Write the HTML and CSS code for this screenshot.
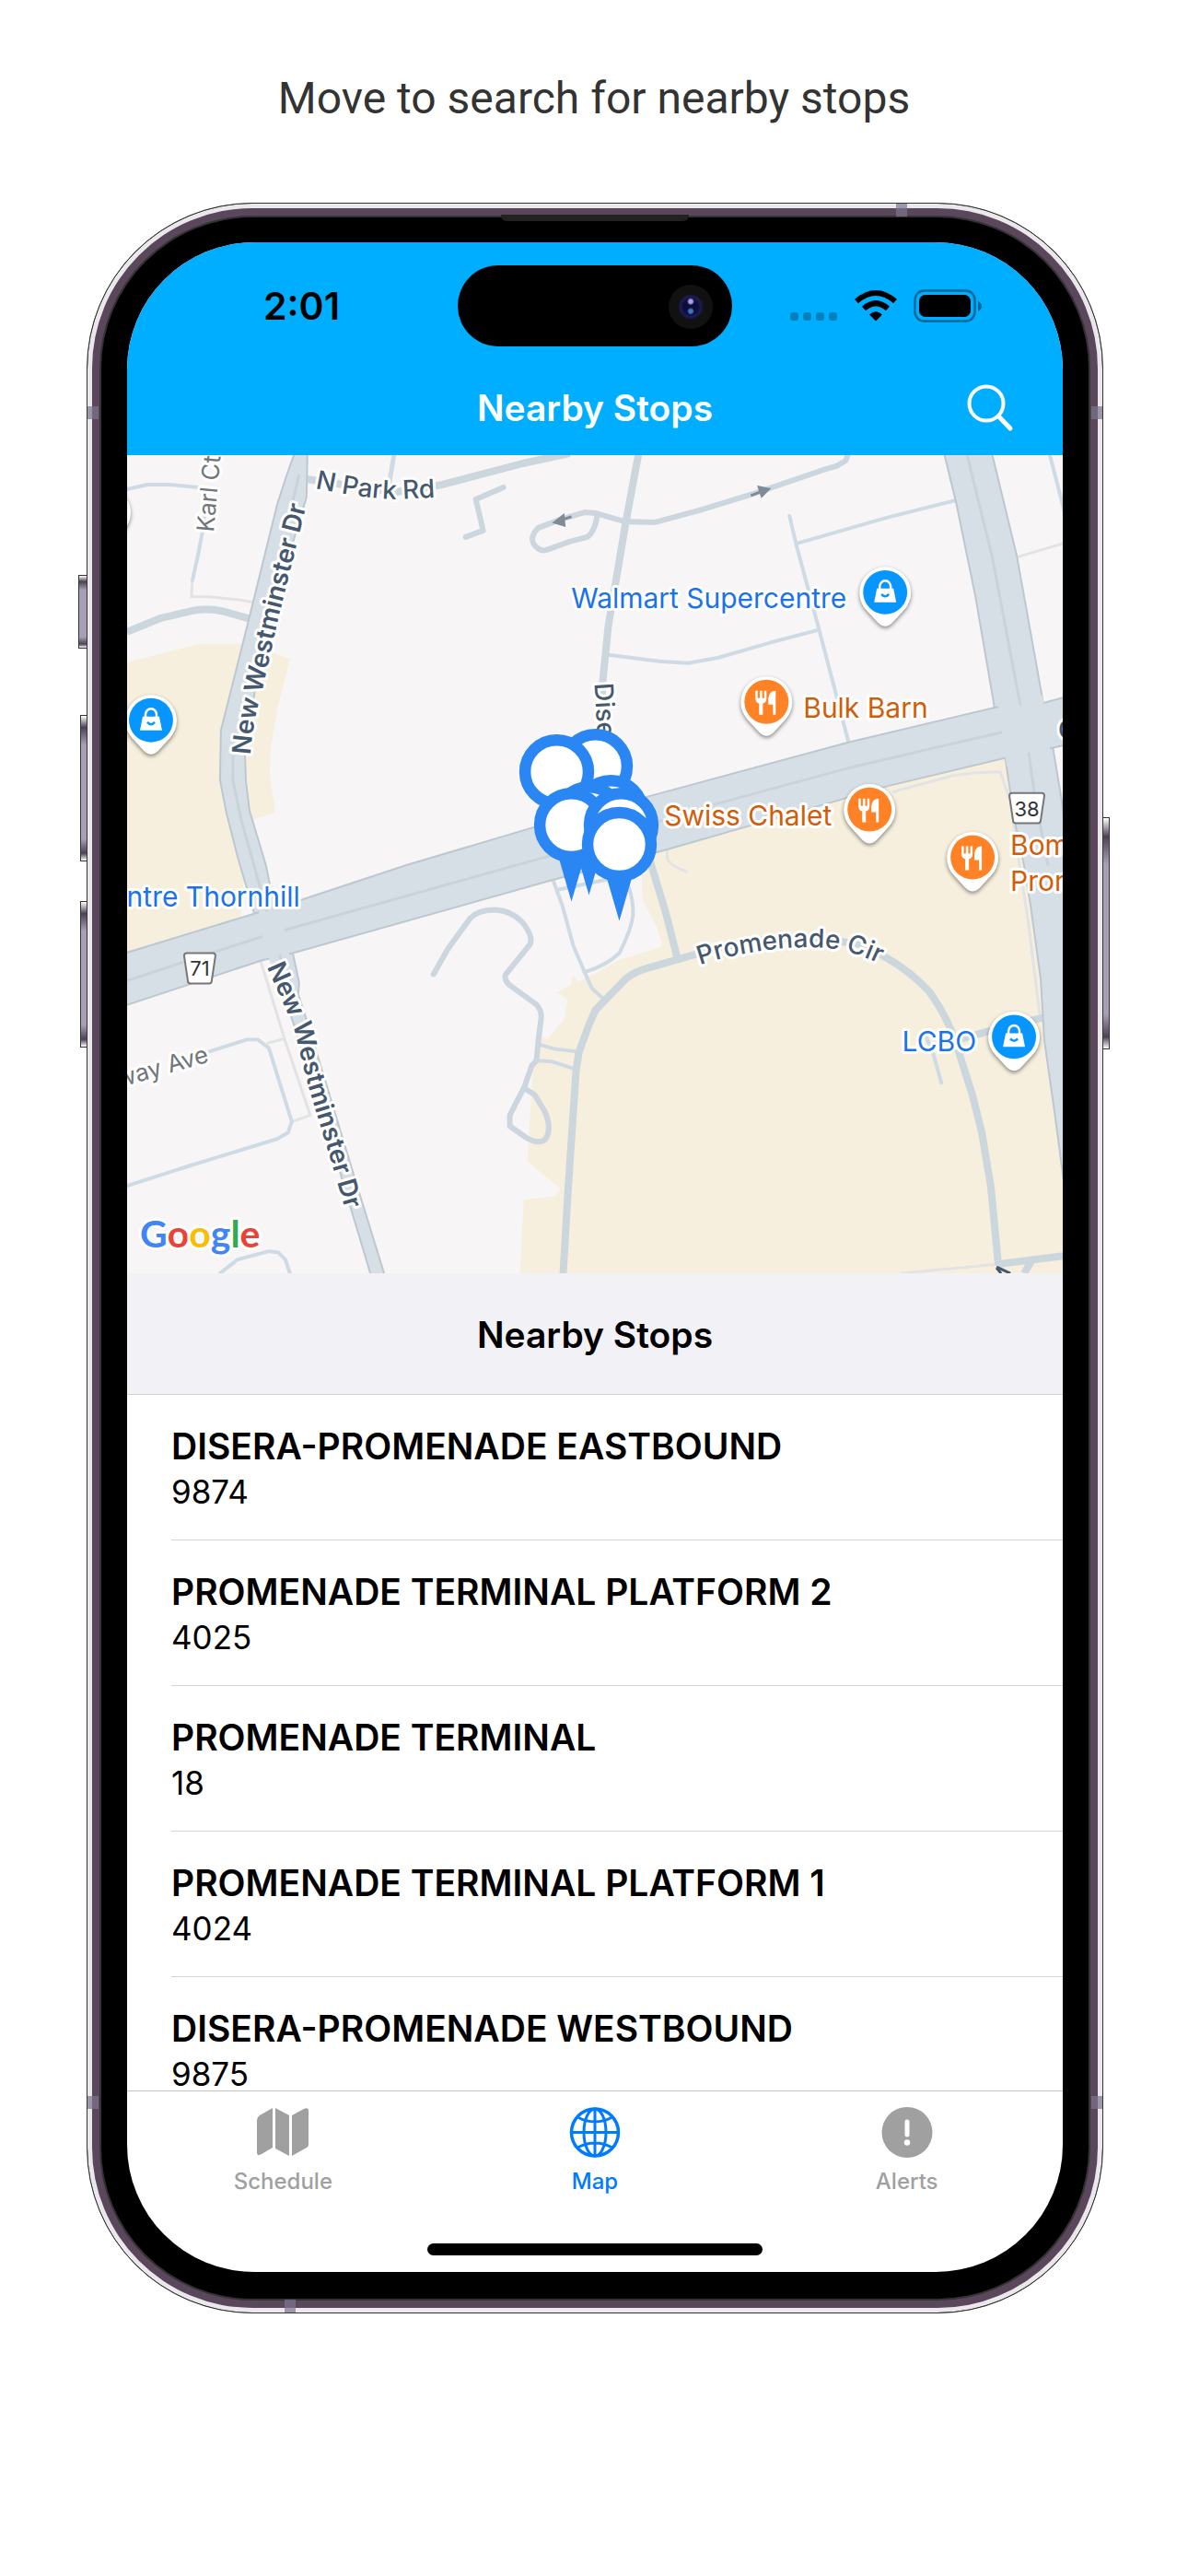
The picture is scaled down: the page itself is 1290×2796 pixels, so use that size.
FILE: index.html
```
<!DOCTYPE html>
<html lang="en">
<head>
    <meta charset="UTF-8"/>
    <meta name="viewport" content="width=device-width, initial-scale=1.0"/>
    <title>Nearby Stops</title>
    <link rel="stylesheet" href="styles.css">
</head>
<body>
<h1 class="caption">Move to search for nearby stops</h1>

<div class="phone">
    <span class="key key-mute"></span>
    <span class="key key-up"></span>
    <span class="key key-down"></span>
    <span class="key key-power"></span>
    <span class="band band-left-top"></span>
    <span class="band band-left-bottom"></span>
    <span class="band band-right-top"></span>
    <span class="band band-right-bottom"></span>
    <span class="band band-top"></span>
    <span class="band band-bottom"></span>
    <span class="speaker"></span>

    <div class="screen">
        <!-- Header -->
        <header class="header">
            <div class="status">
                <span class="time">2:01</span>
                <div class="island"><span class="camera"></span></div>
                <div class="status-icons">
                    <svg width="52" height="36" viewBox="0 0 52 36" fill="#000" opacity=".25">
                        <rect x="0" y="25" width="9" height="9" rx="3"/>
                        <rect x="14" y="25" width="9" height="9" rx="3"/>
                        <rect x="28" y="25" width="9" height="9" rx="3"/>
                        <rect x="42" y="25" width="9" height="9" rx="3"/>
                    </svg>
                    <svg width="46" height="36" viewBox="0 0 46 36">
                        <path d="M23 34.500 L16 27.500 Q23 21 30 27.500 Z"/>
                        <path d="M10 21 Q23 9.500 36 21" fill="none" stroke="#000" stroke-width="6"/>
                        <path d="M2 13 Q23 -5 44 13" fill="none" stroke="#000" stroke-width="6"/>
                    </svg>
                    <svg width="74" height="36" viewBox="0 0 74 36">
                        <rect x="1.500" y="1.500" width="65" height="33" rx="10" fill="none" stroke="#000" stroke-opacity=".4" stroke-width="2.500"/>
                        <rect x="6" y="6" width="56" height="24" rx="7"/>
                        <path d="M70 13 Q74 15 74 18.500 Q74 22 70 24 Z" opacity=".4"/>
                    </svg>
                </div>
            </div>
            <div class="navbar">
                <h2>Nearby Stops</h2>
                <button class="search" aria-label="Search">
                    <svg width="52" height="56" viewBox="0 0 52 56" fill="none" stroke="#fff" stroke-width="4" stroke-linecap="round">
                        <circle cx="21" cy="21" r="18.500"/>
                        <path d="M34.500 35 L47 48" stroke-width="5"/>
                    </svg>
                </button>
            </div>
        </header>

        <!-- Map -->
        <svg class="map" viewBox="138 494 1017 889" role="img" aria-label="Map of nearby stops">
            <defs>
                <g id="poi">
                    <path d="M0 37 Q-4 37 -8 33 L-20 20 A28 28 0 1 1 20 20 L8 33 Q4 37 0 37 Z"/>
                </g>
                <g id="shop">
                    <use href="#poi" class="poi-back"/>
                    <circle r="24" fill="#0795ff"/>
                    <path d="M-9 -4 H9 L12 11 H-12 Z" fill="#fff"/>
                    <path d="M-6 -3 V-6 A6 6.500 0 0 1 6 -6 V-3" fill="none" stroke="#fff" stroke-width="2.500"/>
                    <path d="M-4 2 Q0 7 4 2" fill="none" stroke="#0795ff" stroke-width="2.500"/>
                </g>
                <g id="food">
                    <use href="#poi" class="poi-back"/>
                    <circle r="24" fill="#ff8227"/>
                    <path d="M-12 -12 V-4 Q-12 1 -8 2 V14 H-4 V2 Q0 1 0 -4 V-12 H-2.500 V-4 H-4.700 V-12 H-7.300 V-4 H-9.500 V-12 Z" fill="#fff"/>
                    <path d="M10 -12 V14 H7 V3 H2 V-4 Q3 -12 10 -12 Z" fill="#fff"/>
                </g>
                <g id="stop">
                    <path d="M-14 35 L0 83 L14 35 Z" fill="#2a86f2"/>
                    <circle r="34.500" fill="#fff" stroke="#2a86f2" stroke-width="12.500"/>
                </g>
                <path id="p-karl" d="M232 578 L242 470"/>
                <path id="p-park" d="M342 530 Q395 541 430 542 L490 539"/>
                <path id="p-west-up" d="M272 820 C274 790 280 765 286 745 L302 673 L340 520"/>
                <path id="p-west-down" d="M290 1050 L319 1115 L335 1180 L360 1262 L390 1365"/>
                <path id="p-disera" d="M646 742 L652 850"/>
                <path id="p-prom" d="M761 1048 C800 1034 870 1024 909 1031 C925 1033 950 1042 980 1060"/>
            </defs>

            <rect x="138" y="494" width="1017" height="889" fill="#f7f5f6"/>

            <!-- commercial areas -->
            <g fill="#f6efde">
                <path d="M138 719 L178 709 L218 699 L265 699 L297 709 L315 716 L302 767 L294 813 L293 840 L299 882 L275 890 L265 955 L261 1005 L138 1040 Z"/>
                <path d="M716 925 L967 853 L1092 823 L1113 930 L1131 1063 L1155 1273 V1383 H565 L569 1303 L604 1299 L609 1291 L573 1261 L579 1160 L583 1123 L595 1128 L613 1107 L617 1085 L605 1078 L620 1070 L622 1060 L629 1066 L660 1050 L671 1043 L720 1028 L714 1007 L698 977 L697 940 Z"/>
            </g>

            <!-- footpaths -->
            <g class="path">
                <path d="M209 630 L208 648 L227 648 L258 651 L275 654"/>
                <path d="M1105 605 L1155 590"/>
                <path d="M970 860 L1036 842 L1060 839 L1087 838 L1098 870 L1108 940 L1117 997 L1130 1102"/>
                <path d="M725 922 V933 Q730 941 747 947"/>
                <path d="M283 1043 L309 1128 L337 1211 L318 1218 M290 1133 L309 1128"/>
                <path d="M979 1383 L1084 1373"/>
            </g>

            <!-- minor roads -->
            <g class="lane">
                <path d="M138 531 L160 526 H185 L215 529"/>
                <path d="M224 540 L220 577 L215 603 L209 630"/>
                <path d="M428 494 L423 525" stroke-width="5"/>
                <path d="M858 560 L865 590 L890 683 L922 805"/>
                <path d="M866 590 L960 563 L1039 543"/>
                <path d="M661 711 L716 718 L748 720 L781 714 L836 698 L889 684"/>
                <path d="M1141 494 L1157 556"/>
                <path d="M585 1134 L602 1139 L627 1142 M585 1152 L600 1153 L625 1161"/>
                <path d="M601 956 L611 983 L623 1027 L635 1055 L643 1073 L656 1085 M607 966 L660 955"/>
                <path d="M683 963 Q688 975 688 993 Q686 1010 673 1035 Q660 1048 635 1056"/>
                <path d="M215 1146 L268 1129 H280 L292 1138 L317 1218 L313 1230 L301 1237 L203 1267 L138 1288"/>
                <path d="M239 1383 L258 1368 L292 1359 L302 1360 L310 1368 L315 1383"/>
                <path d="M1007 1127 L1015 1147 L1023 1176"/>
            </g>
            <g class="drive">
                <path d="M547 529 L517 542 L525 576 L506 583"/>
                <path d="M647 557 L636 556 L609 564 L585 573 Q573 585 583 594 Q588 599 594 597 L619 588 L638 583 Q646 578 649 560"/>
                <path d="M647 557 L678 566 L712 567 L760 554 L819 536 L895 510 L909 506 L919 500 L922 492"/>
                <path d="M471 1058 L487 1030 L511 997 Q520 988 538 988 Q556 989 568 1002 Q582 1020 574 1028 L549 1059 Q548 1065 554 1070 L583 1091 Q589 1098 588 1106 L585 1130 L583 1152 L578 1157 L570 1180 L554 1211 V1223 L571 1235 Q585 1244 593 1237 Q600 1225 592 1207 L581 1189 L570 1182"/>
            </g>
            <g class="street">
                <path d="M333 520 L400 530 L430 534 L481 526 L568 503 L619 492"/>
                <path d="M694 492 L680 567 L661 680 L655 740 L648 880"/>
                <path d="M138 686 L175 671 L209 663 Q227 660 244 664 L272 672"/>
                <path d="M612 1383 L617 1297 L626 1163 L629 1143 L640 1113 L647 1097 L680 1063 Q690 1055 705 1051 L778 1030 L833 1020 L881 1018 L933 1025 L960 1038 Q990 1055 1010 1077 Q1030 1105 1039 1133 L1057 1190 L1067 1230 L1077 1290 L1085 1374"/>
                <path d="M705 930 L724 993 L736 1040"/>
                <path d="M1085 1373 L1155 1364 M1122 1368 L1113 1383"/>
                <path d="M1045 1128 L1074 1120 L1134 1105"/>
            </g>

            <!-- arterial roads -->
            <g class="arterial">
                <path d="M320 492 L311 517 L301 548 L271 670 L240 793 L239 847 L246 883 L258 930 L280 1005 L302 1005 L289 940 L271 880 L267 847 L266 813 L280 733 L311 613 L333 540 L334 492 Z"/>
                <path d="M292 1030 L320 1115 L370 1275 L403 1385 H418 L397 1317 L385 1278 L334 1110 L324 1080 L325 1067 L317 1030 Z"/>
                <path d="M1026 492 L1039 545 L1060 647 L1082 775 L1092 820 L1103 893 L1113 940 L1120 983 L1131 1063 L1135 1130 L1146 1207 L1157 1290 L1200 1290 L1154 870 L1144 810 L1135 770 L1105 603 L1078 492 Z"/>
                <path d="M136 1035 L277 992 L328 977 L440 940 L581 898 L704 865 L922 806 L1082 768 L1135 763 L1157 757 V809 L1144 812 L1092 823 L967 853 L716 925 L599 956 L318 1035 L284 1043 L136 1092 Z"/>
            </g>
            <g fill="#d7dfe6">
                <path d="M1084 760 L1133 755 L1142 820 L1094 832 Z"/>
                <path d="M279 980 L295 970 L316 1042 L294 1048 Z"/>
            </g>
            <g class="median">
                <path d="M1051 494 L1078 603 L1109 766"/>
                <path d="M1089 795 L926 833 L778 873 L595 930 L309 1010"/>
                <path d="M285 1017 L138 1065"/>
                <path d="M253 820 V847 L262 890 L290 990"/>
                <path d="M325 515 L318 545"/>
                <path d="M304 1037 L310 1060"/>
                <path d="M1118 817 L1125 867 L1139 940"/>
            </g>
            <g fill="#808b96" stroke="#808b96" stroke-width="3">
                <path d="M621 561 L608 565 M612 560 L603 567 L613 570 Z"/>
                <path d="M816 538 L829 533 M825 529 L835 531 L828 538 Z"/>
            </g>

            <!-- road labels -->
            <g class="road-label">
                <text class="local"><textPath href="#p-karl">Karl Ct</textPath></text>
                <text><textPath href="#p-park">N Park Rd</textPath></text>
                <text class="major"><textPath href="#p-west-up">New Westminster Dr</textPath></text>
                <text class="major"><textPath href="#p-west-down">New Westminster Dr</textPath></text>
                <text><textPath href="#p-disera">Disera</textPath></text>
                <text><textPath href="#p-prom">Promenade Cir</textPath></text>
                <text class="local" text-anchor="end" transform="translate(228 1153) rotate(-16)">way Ave</text>
                <text x="1150" y="802">C</text>
                <path d="M1083 1376 L1098 1383 M1088 1383 L1083 1377" stroke="#46586e" stroke-width="3"/>
            </g>
            <g class="shield">
                <path d="M203 1035 H231 Q234 1035 234 1038 L230 1065 Q230 1068 227 1068 H207 Q204 1068 204 1065 L200 1038 Q200 1035 203 1035 Z"/>
                <text x="217" y="1060">71</text>
                <path d="M1100 861 H1132 Q1135 861 1135 864 L1131 891 Q1131 894 1128 894 H1104 Q1101 894 1101 891 L1097 864 Q1097 861 1100 861 Z"/>
                <text x="1116" y="886">38</text>
            </g>

            <!-- places -->
            <use href="#poi" class="poi-back" x="114" y="556"/>
            <use href="#shop" x="164" y="782"/>
            <use href="#shop" x="962" y="643"/>
            <use href="#shop" x="1102" y="1126"/>
            <use href="#food" x="833" y="762"/>
            <use href="#food" x="945" y="879"/>
            <use href="#food" x="1057" y="931"/>
            <g class="place shop-name">
                <text x="920" y="660" text-anchor="end">Walmart Supercentre</text>
                <text x="326" y="984" text-anchor="end">entre Thornhill</text>
                <text x="1061" y="1142" text-anchor="end">LCBO</text>
            </g>
            <g class="place food-name">
                <text x="873" y="779">Bulk Barn</text>
                <text x="904" y="896" text-anchor="end">Swiss Chalet</text>
                <text x="1098" y="928">Bom</text>
                <text x="1098" y="967">Prom</text>
            </g>

            <!-- bus stops -->
            <use href="#stop" x="647" y="832"/>
            <use href="#stop" x="605" y="838"/>
            <use href="#stop" x="664" y="882"/>
            <use href="#stop" x="640" y="889"/>
            <use href="#stop" x="621" y="896"/>
            <use href="#stop" x="675" y="896"/>
            <use href="#stop" x="673" y="917"/>

            <text class="google" x="152" y="1355"><tspan fill="#4285f4">G</tspan><tspan fill="#ea4335">o</tspan><tspan fill="#fbbc04">o</tspan><tspan fill="#4285f4">g</tspan><tspan fill="#34a853">l</tspan><tspan fill="#ea4335">e</tspan></text>
        </svg>

        <!-- Stop list -->
        <h3 class="section-title">Nearby Stops</h3>
        <ul class="stops">
            <li><a href="#9874"><strong>DISERA-PROMENADE EASTBOUND</strong><span>9874</span></a></li>
            <li><a href="#4025"><strong>PROMENADE TERMINAL PLATFORM 2</strong><span>4025</span></a></li>
            <li><a href="#18"><strong>PROMENADE TERMINAL</strong><span>18</span></a></li>
            <li><a href="#4024"><strong>PROMENADE TERMINAL PLATFORM 1</strong><span>4024</span></a></li>
            <li><a href="#9875"><strong>DISERA-PROMENADE WESTBOUND</strong><span>9875</span></a></li>
        </ul>

        <!-- Tab bar -->
        <nav class="tabs">
            <a href="#schedule">
                <svg width="56" height="55" viewBox="0 0 56 55" fill="currentColor">
                    <path d="M17 1 V44 L5 51 Q0 54 0 49 V14 Q0 11 3 9 Z"/>
                    <path d="M20 1 L35 9 V53 L20 45 Z"/>
                    <path d="M38 9 L51 2 Q56 0 56 4 V41 Q56 43 54 44 L38 53 Z"/>
                </svg>
                Schedule
            </a>
            <a href="#map" class="active">
                <svg width="56" height="55" viewBox="0 0 56 55" fill="none" stroke="currentColor" stroke-width="3">
                    <circle cx="28" cy="27.500" r="25.500" stroke-width="3.500"/>
                    <ellipse cx="28" cy="27.500" rx="12" ry="25.500"/>
                    <path d="M28 2 V53 M2 27.500 H54 M9 11 Q28 21 47 11 M9 44 Q28 34 47 44"/>
                </svg>
                Map
            </a>
            <a href="#alerts">
                <svg width="56" height="55" viewBox="0 0 56 55">
                    <circle cx="28" cy="27.500" r="27.500" fill="currentColor"/>
                    <path d="M28 16 V30" stroke="#fff" stroke-width="5" stroke-linecap="round"/>
                    <circle cx="28" cy="38.500" r="3.200" fill="#fff"/>
                </svg>
                Alerts
            </a>
        </nav>
        <div class="home-indicator"></div>
    </div>
</div>
</body>
</html>
```

FILE: styles.css
```
* {
    margin: 0;
    padding: 0;
    box-sizing: border-box;
}
body {
    background: #fff;
    font-family: Inter, "Liberation Sans", sans-serif;
    color: #000;
}
a {
    color: inherit;
    text-decoration: none;
}
.caption {
    padding: 77px 0 83px;
    text-align: center;
    font-family: Roboto, sans-serif;
    font-size: 48px;
    line-height: 60px;
    font-weight: 400;
    color: #333;
}

/* Phone frame */
.phone {
    position: relative;
    margin: 0 92px 0 94px;
    padding: 42px 43px 44px;
    border: 1px solid #333;
    border-radius: 180px;
    background: #000;
    box-shadow: inset 0 0 0 5px #ebe8ec, inset 0 0 0 13px #5a475c, inset 0 0 0 15px #333;
}
.key {
    position: absolute;
    width: 8px;
    height: 159px;
    border: 1px solid #333;
    background: linear-gradient(#fff, #4d4255 8%, #a79fb4 20%, #a79fb4 85%, #4d4255 95%, #fff);
}
.key-mute {
    left: -10px;
    top: 403px;
    width: 10px;
    height: 80px;
}
.key-up {
    left: -8px;
    top: 555px;
}
.key-down {
    left: -8px;
    top: 757px;
}
.key-power {
    right: -8px;
    top: 666px;
    height: 252px;
}
.band {
    position: absolute;
    width: 12px;
    height: 14px;
    background: #7d7590;
    opacity: 0.7;
}
.band-left-top {
    left: 0;
    top: 220px;
}
.band-left-bottom {
    left: 0;
    bottom: 221px;
}
.band-right-top {
    right: 0;
    top: 220px;
}
.band-right-bottom {
    right: 0;
    bottom: 221px;
}
.band-top {
    top: 0;
    right: 212px;
}
.band-bottom {
    bottom: 0;
    left: 214px;
}
.speaker {
    position: absolute;
    top: 12px;
    left: 50%;
    width: 204px;
    height: 7px;
    margin-left: -102px;
    border-radius: 0 0 6px 6px;
    background: #222;
}
.screen {
    border-radius: 138px;
    overflow: hidden;
    background: #fff;
}

/* Header */
.header {
    background: #00aeff;
}
.status {
    position: relative;
    display: flex;
    align-items: center;
    justify-content: space-between;
    height: 138px;
    padding: 0 88px 0 148px;
}
.time {
    font-size: 41px;
    font-weight: 600;
}
.island {
    position: absolute;
    top: 25px;
    left: 50%;
    width: 298px;
    height: 88px;
    margin-left: -149px;
    border-radius: 44px;
    background: #000;
}
.camera {
    position: absolute;
    top: 21px;
    right: 21px;
    width: 48px;
    height: 48px;
    border-radius: 50%;
    background: radial-gradient(circle at 50% 38%, #a9a0e8 0 2px, transparent 4px), radial-gradient(circle at 50% 60%, #3f76b8 0 2px, transparent 4px), radial-gradient(circle, #0d0d3a 0 8px, #1c1c5c 11px, #111 14px);
}
.status-icons {
    display: flex;
    gap: 18px;
}
.navbar {
    position: relative;
    display: flex;
    align-items: center;
    justify-content: center;
    height: 93px;
    padding-bottom: 10px;
    color: #fff;
}
.navbar h2 {
    font-size: 39px;
    line-height: 48px;
    font-weight: 600;
}
.search {
    position: absolute;
    top: 16px;
    right: 52px;
    border: none;
    background: none;
    cursor: pointer;
}
.search svg {
    display: block;
}

/* Map */
.map {
    display: block;
    width: 100%;
    font-family: Inter, sans-serif;
}
.map text {
    paint-order: stroke;
    stroke: #fff;
    stroke-width: 6px;
    stroke-linejoin: round;
}
.path {
    fill: none;
    stroke: #e1e3e5;
    stroke-width: 3px;
}
.lane {
    fill: none;
    stroke: #cfdbe4;
    stroke-width: 4px;
    stroke-linejoin: round;
    stroke-linecap: round;
}
.drive {
    fill: none;
    stroke: #ccd6df;
    stroke-width: 6px;
    stroke-linejoin: round;
    stroke-linecap: round;
}
.street {
    fill: none;
    stroke: #ccd6dd;
    stroke-width: 8px;
    stroke-linejoin: round;
}
.arterial {
    fill: #d7dfe6;
    stroke: #bcc8d0;
    stroke-width: 2px;
}
.median {
    fill: none;
    stroke: #c8d3db;
    stroke-width: 3px;
}
.road-label {
    font-size: 28px;
    font-weight: 500;
    fill: #46586e;
}
.road-label .major {
    font-weight: 600;
}
.road-label .local {
    font-size: 26px;
    font-weight: 400;
    fill: #70767b;
}
.shield path {
    fill: #fff;
    stroke: #777;
    stroke-width: 2px;
}
.shield text {
    font-size: 22px;
    fill: #333;
    text-anchor: middle;
    stroke: none;
}
.poi-back {
    fill: #fff;
    filter: drop-shadow(0 2px 2px rgba(0, 0, 0, 0.45));
}
.place {
    font-size: 30px;
}
.shop-name {
    fill: #1a73e8;
}
.food-name {
    fill: #d35c08;
}
.map .google {
    font-family: Lato, sans-serif;
    font-size: 41px;
    font-weight: 700;
}

/* Stop list */
.section-title {
    height: 132px;
    line-height: 134px;
    border-bottom: 1px solid #d1d1d6;
    background: #f2f1f6;
    text-align: center;
    font-size: 39px;
    font-weight: 600;
}
.stops {
    max-height: 755px;
    padding-left: 48px;
    overflow: hidden;
    list-style: none;
}
.stops li {
    border-bottom: 1px solid #d4d4d6;
}
.stops a {
    display: flex;
    flex-direction: column;
    padding: 32px 0 27px;
}
.stops strong {
    font-size: 39px;
    line-height: 48px;
    font-weight: 600;
}
.stops span {
    font-size: 35px;
    line-height: 50px;
}

/* Tab bar */
.tabs {
    display: flex;
    padding: 17px 0 53px;
    border-top: 1px solid #c4c4c6;
}
.tabs a {
    flex: 1;
    display: flex;
    flex-direction: column;
    align-items: center;
    gap: 12px;
    font-size: 24px;
    line-height: 28px;
    font-weight: 500;
    color: #a0a0a0;
}
.tabs .active {
    color: #007aff;
}
.home-indicator {
    width: 364px;
    height: 13px;
    margin: 0 auto 18px;
    border-radius: 7px;
    background: #000;
}
```
